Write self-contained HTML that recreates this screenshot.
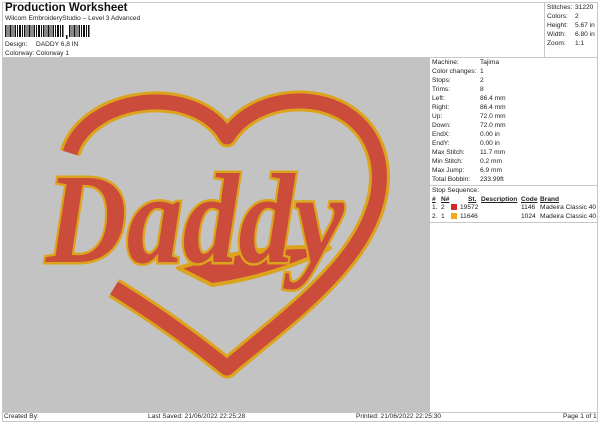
<!DOCTYPE html>
<html><head><meta charset="utf-8"><style>
*{margin:0;padding:0;box-sizing:border-box}
body{width:600px;height:424px;background:#fff;font-family:"Liberation Sans",Arial,sans-serif;color:#222;position:relative;overflow:hidden}
.a{position:absolute;white-space:nowrap}
.s{font-size:6.6px;line-height:9px}
.ln{position:absolute;background:#c8c8c8}
</style></head><body>
<div class="ln" style="left:2px;top:2px;width:596px;height:1px"></div>
<div class="ln" style="left:2px;top:2px;width:1px;height:420px"></div>
<div class="ln" style="left:597px;top:2px;width:1px;height:420px"></div>
<div class="ln" style="left:2px;top:421px;width:596px;height:1px"></div>
<div class="ln" style="left:2px;top:57px;width:596px;height:1px"></div>
<div class="ln" style="left:544px;top:2px;width:1px;height:56px"></div>
<div class="ln" style="left:2px;top:412px;width:596px;height:1px"></div>

<div class="a" style="left:5px;top:2px;font-size:11.5px;font-weight:bold;color:#111">Production Worksheet</div>
<div class="a s" style="left:5px;top:14px">Wilcom EmbroideryStudio – Level 3 Advanced</div>
<svg class="a" style="left:5px;top:25px" width="86" height="14">
<g fill="#111">
<rect x="0" y="0" width="1.5" height="12"/><rect x="2.5" y="0" width="1" height="12"/><rect x="4.5" y="0" width="2" height="12"/><rect x="7.5" y="0" width="1" height="12"/><rect x="9.5" y="0" width="1.5" height="12"/><rect x="12" y="0" width="1" height="12"/><rect x="14" y="0" width="2" height="12"/><rect x="17" y="0" width="1" height="12"/><rect x="19" y="0" width="1.5" height="12"/><rect x="21.5" y="0" width="1" height="12"/><rect x="23.5" y="0" width="2" height="12"/><rect x="26.5" y="0" width="1" height="12"/><rect x="28.5" y="0" width="1.5" height="12"/><rect x="31" y="0" width="1" height="12"/><rect x="33" y="0" width="2" height="12"/><rect x="36" y="0" width="1" height="12"/><rect x="38" y="0" width="1.5" height="12"/><rect x="40.5" y="0" width="1" height="12"/><rect x="42.5" y="0" width="2" height="12"/><rect x="45.5" y="0" width="1" height="12"/><rect x="47.5" y="0" width="1.5" height="12"/><rect x="50" y="0" width="1" height="12"/><rect x="52" y="0" width="2" height="12"/><rect x="55" y="0" width="1" height="12"/><rect x="57" y="0" width="1.5" height="12"/>
<rect x="61" y="10" width="1.5" height="4"/>
<rect x="64" y="0" width="1.5" height="12"/><rect x="66.5" y="0" width="1" height="12"/><rect x="68.5" y="0" width="2" height="12"/><rect x="71.5" y="0" width="1" height="12"/><rect x="73.5" y="0" width="1.5" height="12"/><rect x="76" y="0" width="1" height="12"/><rect x="78" y="0" width="2" height="12"/><rect x="81" y="0" width="1" height="12"/><rect x="83" y="0" width="1.5" height="12"/>
</g></svg>
<div class="a s" style="left:5px;top:40px">Design:</div><div class="a s" style="left:36px;top:40px">DADDY 6,8 IN</div>
<div class="a s" style="left:5px;top:49px">Colorway:</div><div class="a s" style="left:36px;top:49px">Colorway 1</div>

<div class="a s" style="left:547px;top:3px">Stitches:</div><div class="a s" style="left:575px;top:3px">31220</div>
<div class="a s" style="left:547px;top:12px">Colors:</div><div class="a s" style="left:575px;top:12px">2</div>
<div class="a s" style="left:547px;top:21px">Height:</div><div class="a s" style="left:575px;top:21px">5.67 in</div>
<div class="a s" style="left:547px;top:30px">Width:</div><div class="a s" style="left:575px;top:30px">6.80 in</div>
<div class="a s" style="left:547px;top:39px">Zoom:</div><div class="a s" style="left:575px;top:39px">1:1</div>

<div class="a" style="left:3px;top:58px;width:427px;height:354px;background:#c3c3c3"></div>
<svg class="a" style="left:0;top:0" width="430" height="412">
<path d="M70 153 C88 95,195 82,227 137 C262 82,370 88,379 168 C387 250,285 318,227 368 C190 338,150 310,114 288" fill="none" stroke="#dca41c" stroke-width="21" stroke-linejoin="round"/>
<path d="M70 153 C88 95,195 82,227 137 C262 82,370 88,379 168 C387 250,285 318,227 368 C190 338,150 310,114 288" fill="none" stroke="#cc4c3c" stroke-width="15" stroke-linejoin="round"/>
<path d="M178 268 C230 252,285 244,330 248 C305 262,262 278,212 285 Z" fill="#cc4c3c" stroke="#dca41c" stroke-width="4" stroke-linejoin="round"/>
<text x="46" y="262" font-family="Liberation Serif,serif" font-style="italic" font-weight="bold" font-size="128" textLength="298" lengthAdjust="spacingAndGlyphs" fill="#cc4c3c" stroke="#dca41c" stroke-width="5" paint-order="stroke">Daddy</text>
</svg>

<div class="ln" style="left:430px;top:185px;width:167px;height:1px"></div>
<div class="ln" style="left:430px;top:222px;width:167px;height:1px"></div>
<div style="position:absolute;left:432px;top:58px;font-size:6.6px;line-height:9px">
<div style="display:grid;grid-template-columns:48px auto">
<span>Machine:</span><span>Tajima</span>
<span>Color changes:</span><span>1</span>
<span>Stops:</span><span>2</span>
<span>Trims:</span><span>8</span>
<span>Left:</span><span>86.4 mm</span>
<span>Right:</span><span>86.4 mm</span>
<span>Up:</span><span>72.0 mm</span>
<span>Down:</span><span>72.0 mm</span>
<span>EndX:</span><span>0.00 in</span>
<span>EndY:</span><span>0.00 in</span>
<span>Max Stitch:</span><span>11.7 mm</span>
<span>Min Stitch:</span><span>0.2 mm</span>
<span>Max Jump:</span><span>6.9 mm</span>
<span>Total Bobbin:</span><span>233.99ft</span>
</div>
<div style="margin-top:2px">Stop Sequence:</div>
</div>
<div class="a s" style="left:432px;top:195px;font-weight:bold;text-decoration:underline">#</div>
<div class="a s" style="left:441px;top:195px;font-weight:bold;text-decoration:underline">N#</div>
<div class="a s" style="left:468px;top:195px;font-weight:bold;text-decoration:underline">St.</div>
<div class="a s" style="left:481px;top:195px;font-weight:bold;text-decoration:underline">Description</div>
<div class="a s" style="left:521px;top:195px;font-weight:bold;text-decoration:underline">Code</div>
<div class="a s" style="left:540px;top:195px;font-weight:bold;text-decoration:underline">Brand</div>
<div class="a s" style="left:432px;top:203px">1.</div><div class="a s" style="left:441px;top:203px">2</div>
<div class="a" style="left:451px;top:204px;width:6px;height:6px;background:#d42a2a"></div>
<div class="a s" style="left:460px;top:203px">19572</div><div class="a s" style="left:521px;top:203px">1146</div><div class="a s" style="left:540px;top:203px">Madeira Classic 40</div>
<div class="a s" style="left:432px;top:212px">2.</div><div class="a s" style="left:441px;top:212px">1</div>
<div class="a" style="left:451px;top:213px;width:6px;height:6px;background:#f2a81d"></div>
<div class="a s" style="left:460px;top:212px">11646</div><div class="a s" style="left:521px;top:212px">1024</div><div class="a s" style="left:540px;top:212px">Madeira Classic 40</div>

<div class="a s" style="left:4px;top:412px">Created By:</div>
<div class="a s" style="left:148px;top:412px">Last Saved: 21/06/2022 22:25:28</div>
<div class="a s" style="left:356px;top:412px">Printed: 21/06/2022 22:25:30</div>
<div class="a s" style="left:563px;top:412px">Page 1 of 1</div>
</body></html>
